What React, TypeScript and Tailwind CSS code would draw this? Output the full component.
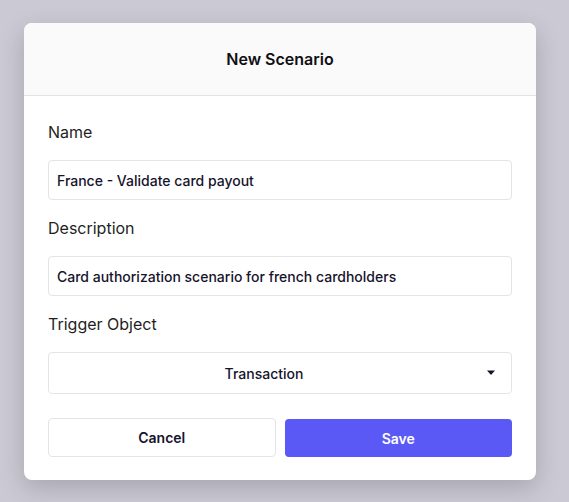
import React from "react";

export default function App() {
  return (
    <div
      className="w-[569px] h-[502px] bg-[#cbc9d3] pt-[23px] pl-[24px]"
      style={{ fontFamily: "Inter, 'Noto Sans', sans-serif" }}
    >
      <div className="w-[512px] h-[457px] bg-white rounded-lg overflow-hidden shadow-[0_8px_24px_rgba(0,0,0,0.18)] flex flex-col">
        <div className="h-[73px] bg-[#fafafa] border-b border-[#e4e4e7] flex items-center justify-center">
          <span className="text-[16px] font-semibold text-[#0f0f14]">New Scenario</span>
        </div>
        <div className="px-6 pt-[24px] flex flex-col">
          <label className="text-[16px] leading-6 text-[#1f1f24]">Name</label>
          <div className="mt-4 h-10 border border-[#e4e4e7] rounded-[4px] flex items-center px-2 text-[14px] text-[#16142c] font-medium">
            France - Validate card payout
          </div>
          <label className="mt-4 text-[16px] leading-6 text-[#1f1f24]">Description</label>
          <div className="mt-4 h-10 border border-[#e4e4e7] rounded-[4px] flex items-center px-2 text-[14px] text-[#16142c] font-medium">
            Card authorization scenario for french cardholders
          </div>
          <label className="mt-4 text-[16px] leading-6 text-[#1f1f24]">Trigger Object</label>
          <div className="mt-4 h-[42px] border border-[#e4e4e7] rounded-[4px] flex items-center relative pr-8 text-[14px] text-[#16142c] font-medium">
            <span className="flex-1 text-center">Transaction</span>
            <svg className="absolute right-[15px] top-[17px]" width="10" height="6" viewBox="0 0 10 6">
              <path d="M1 0.5 L9 0.5 L5 5 Z" fill="#16142c" />
            </svg>
          </div>
          <div className="mt-[24px] grid grid-cols-2 gap-[9px]">
            <button className="h-[39px] border border-[#e4e4e7] rounded-[4px] bg-white text-[14px] font-semibold text-[#16142c]">
              Cancel
            </button>
            <button className="h-[38px] mt-[1px] rounded-[4px] bg-[#5a59f6] text-[14px] font-semibold text-white">
              Save
            </button>
          </div>
        </div>
      </div>
    </div>
  );
}
